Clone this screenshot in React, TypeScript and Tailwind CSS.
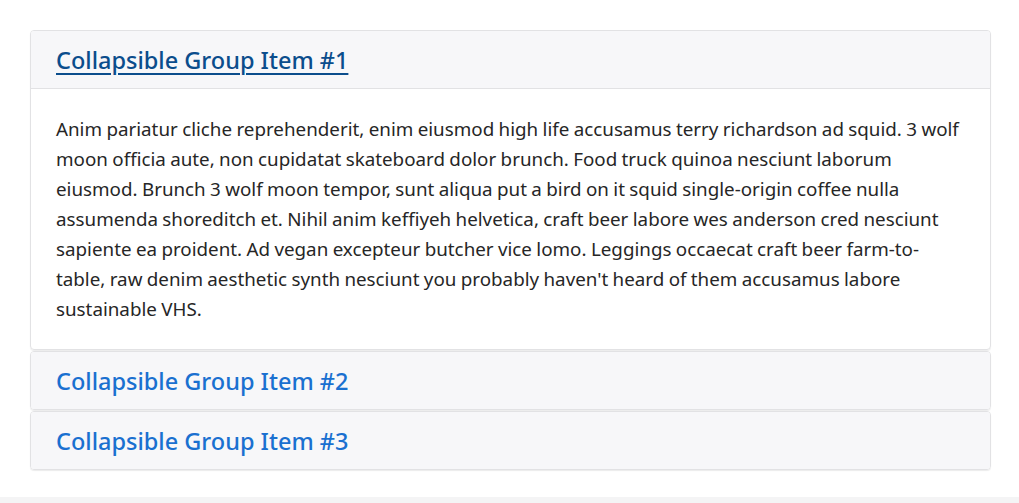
import React from "react";

const body =
  "Anim pariatur cliche reprehenderit, enim eiusmod high life accusamus terry richardson ad squid. 3 wolf moon officia aute, non cupidatat skateboard dolor brunch. Food truck quinoa nesciunt laborum eiusmod. Brunch 3 wolf moon tempor, sunt aliqua put a bird on it squid single-origin coffee nulla assumenda shoreditch et. Nihil anim keffiyeh helvetica, craft beer labore wes anderson cred nesciunt sapiente ea proident. Ad vegan excepteur butcher vice lomo. Leggings occaecat craft beer farm-to-table, raw denim aesthetic synth nesciunt you probably haven't heard of them accusamus labore sustainable VHS.";

function Header({ label, active }: { label: string; active?: boolean }) {
  return (
    <div className="h-[57px] flex items-center px-[25px] pt-[2px] bg-[#f7f7f9]">
      <a
        href="#"
        className={
          active
            ? "text-[23.5px] font-medium leading-none text-[#0b4d8c] underline decoration-[2px] underline-offset-[4px]"
            : "text-[23.5px] font-medium leading-none text-[#1a70d0] no-underline"
        }
      >
        {label}
      </a>
    </div>
  );
}

export default function App() {
  return (
    <div
      className="w-[1019px] h-[503px] bg-white flex flex-col"
      style={{ fontFamily: '"Noto Sans", "Open Sans", sans-serif' }}
    >
      <div className="flex-1 pt-[30px] px-[30px] pr-[28px]">
        <div className="flex flex-col">
          <div className="border border-[#e2e2e4] rounded-[4px] overflow-hidden shadow-[0_1px_1px_rgba(0,0,0,0.08)]">
            <div className="border-b border-[#e2e2e4]">
              <Header label="Collapsible Group Item #1" active />
            </div>
            <div className="p-[25px] text-[18.8px] leading-[30px] [word-spacing:-0.5px] text-[#262626]">
              {body}
            </div>
          </div>
          <div className="mt-[1px] border border-[#e2e2e4] rounded-[4px] overflow-hidden shadow-[0_1px_1px_rgba(0,0,0,0.08)]">
            <Header label="Collapsible Group Item #2" />
          </div>
          <div className="mt-[1px] border border-[#e2e2e4] rounded-[4px] overflow-hidden shadow-[0_1px_1px_rgba(0,0,0,0.08)]">
            <Header label="Collapsible Group Item #3" />
          </div>
        </div>
      </div>
      <div className="h-[6px] bg-[#f4f4f5]" />
    </div>
  );
}
